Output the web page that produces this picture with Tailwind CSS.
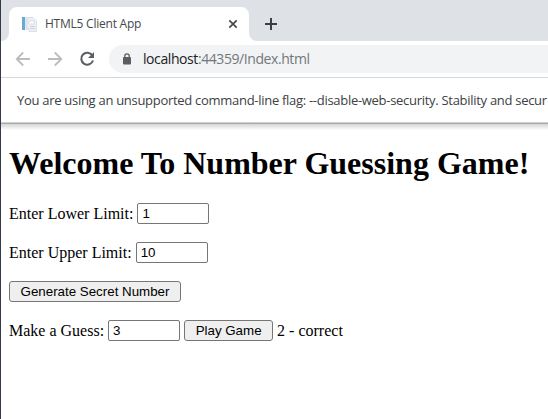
<!DOCTYPE html>
<html lang="en">
<head>
<meta charset="utf-8">
<title>HTML5 Client App</title>
<script src="https://cdn.jsdelivr.net/npm/@tailwindcss/browser@4"></script>
</head>
<body class="flex h-[419px] w-[548px] overflow-hidden bg-white">
<div class="w-px shrink-0 bg-[#353a4b]"></div>
<div class="flex min-w-0 grow flex-col font-['Open_Sans',sans-serif]">
  <header class="shrink-0">
    <div class="flex h-[41px] items-end bg-[#dee1e6]">
      <svg class="h-2 w-2 shrink-0" viewBox="0 0 8 8"><path d="M8 0V8H0A8 8 0 0 0 8 0Z" fill="#fff"/></svg>
      <div class="flex h-[34px] w-[240px] shrink-0 items-center rounded-t-lg bg-white pl-3 pr-[11px]">
        <svg class="h-4 w-4 shrink-0" viewBox="0 0 16 16">
          <rect x="1" y="1" width="11" height="13" fill="#e4e9f0"/>
          <rect x="1" y="1" width="3" height="13" fill="#6aa9d2"/>
          <path d="M6 1.5H12L15.5 5V15.5H8V13H6Z" fill="#eceff5" stroke="#d3d9e3" stroke-width=".7"/>
          <path d="M8 5H13V8H8Z" fill="#fff" stroke="#ccd3df" stroke-width=".6"/>
          <path d="M9 10.5H14M9 12.5H14" stroke="#c4cbd8" stroke-width=".8"/>
        </svg>
        <span class="ml-2 whitespace-nowrap text-[12px] leading-4 tracking-[-0.23px] text-[#45494d]">HTML5 Client App</span>
        <svg class="ml-auto h-[10px] w-[10px]" viewBox="0 0 10 10"><path d="M1.3 1.3L8.7 8.7M8.7 1.3L1.3 8.7" stroke="#45494d" stroke-width="1.7"/></svg>
      </div>
      <svg class="h-2 w-2 shrink-0" viewBox="0 0 8 8"><path d="M0 0V8H8A8 8 0 0 1 0 0Z" fill="#fff"/></svg>
      <svg class="mb-[11px] ml-2 h-3 w-3" viewBox="0 0 12 12"><path d="M6 0V12M0 6H12" stroke="#3c4043" stroke-width="2"/></svg>
    </div>
    <div class="flex h-[37px] items-center border-b border-[#d5d7da] bg-white pl-[14px]">
      <svg class="h-4 w-4 shrink-0" viewBox="0 0 16 16" fill="none" stroke="#babcbe" stroke-width="1.8"><path d="M15 8H2M8.2 1.5L1.7 8L8.2 14.5"/></svg>
      <svg class="ml-4 h-4 w-4 shrink-0" viewBox="0 0 16 16" fill="none" stroke="#babcbe" stroke-width="1.8"><path d="M1 8H14M7.8 1.5L14.3 8L7.8 14.5"/></svg>
      <svg class="ml-4 h-4 w-4 shrink-0" viewBox="0 0 16 16"><path d="M13.3 4.4A6 6 0 1 0 14 9.5" fill="none" stroke="#5a5e62" stroke-width="2"/><path d="M15 1V7H9Z" fill="#5a5e62"/></svg>
      <div class="ml-[14px] flex h-7 grow items-center rounded-l-full bg-[#f1f3f4] pl-[14px]">
        <svg class="h-3 w-2 shrink-0" viewBox="0 0 8 12"><rect y="4" width="8" height="7.5" rx="1" fill="#5a5e62"/><path d="M1.8 4.5V3A2.2 2.2 0 0 1 6.2 3V4.5" fill="none" stroke="#5a5e62" stroke-width="1.3"/></svg>
        <span class="ml-3 whitespace-nowrap text-[14px] leading-5 tracking-[-0.42px] text-[#73777b]"><span class="text-[#202124]">localhost</span>:44359/Index.html</span>
      </div>
    </div>
    <div class="flex h-[44px] items-center whitespace-nowrap pl-4 pt-px text-[13px] tracking-[-0.29px] text-[#3c4043]">You are using an unsupported command-line flag: --disable-web-security. Stability and secur</div>
    <div class="h-px bg-[#d0d3d2]"></div>
    <div class="h-px bg-[#a6aaa8]"></div>
    <div class="h-[6px] bg-linear-to-b from-[#d3d6d4] to-white"></div>
  </header>
  <main class="px-2 pt-[15px] font-['Liberation_Serif',serif] text-[16px] leading-[18px] text-black">
    <h1 class="whitespace-nowrap text-[32px] font-bold leading-9">Welcome To Number Guessing Game!</h1>
    <div class="mt-[22px] flex h-[21px] items-center">
      <label for="lower">Enter Lower Limit:</label>
      <input id="lower" value="1" class="ml-1 h-[21px] w-[72px] rounded-[2px] border border-[#767676] px-1 font-['Liberation_Sans',sans-serif] text-[13.333px]">
    </div>
    <div class="mt-[18px] flex h-[21px] items-center">
      <label for="upper">Enter Upper Limit:</label>
      <input id="upper" value="10" class="ml-1 h-[21px] w-[72px] rounded-[2px] border border-[#767676] px-1 font-['Liberation_Sans',sans-serif] text-[13.333px]">
    </div>
    <button class="mt-[18px] block h-[21px] w-[172px] whitespace-nowrap rounded-[3px] border border-[#767676] bg-[#efefef] font-['Liberation_Sans',sans-serif] text-[13.333px] leading-[15px]">Generate Secret Number</button>
    <div class="mt-[18px] flex h-[21px] items-center">
      <label for="guess">Make a Guess:</label>
      <input id="guess" value="3" class="ml-1 h-[21px] w-[72px] rounded-[2px] border border-[#767676] px-1 font-['Liberation_Sans',sans-serif] text-[13.333px]">
      <button class="ml-1 h-[21px] w-[89px] whitespace-nowrap rounded-[3px] border border-[#767676] bg-[#efefef] font-['Liberation_Sans',sans-serif] text-[13.333px] leading-[15px]">Play Game</button>
      <span class="ml-1">2 - correct</span>
    </div>
  </main>
</div>
</body>
</html>
